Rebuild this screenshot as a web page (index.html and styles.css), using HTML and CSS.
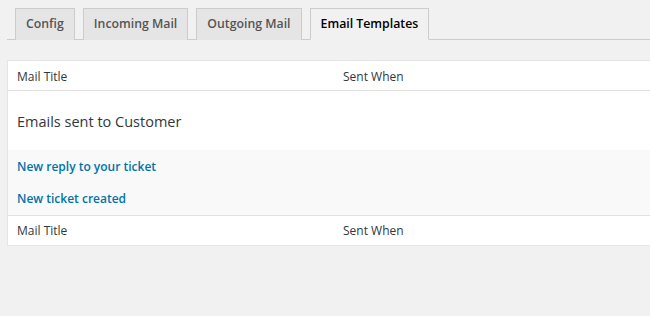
FILE: index.html
```html
<!DOCTYPE html>
<html>
<head>
    <title>Email Templates</title>
    <link rel="stylesheet" href="styles.css">
</head>
<body>
    <div class="wrap">
        <h2 class="nav-tab-wrapper">
            <a href="#" class="nav-tab">Config</a>
            <a href="#" class="nav-tab">Incoming Mail</a>
            <a href="#" class="nav-tab">Outgoing Mail</a>
            <a href="#" class="nav-tab nav-tab-active">Email Templates</a>
        </h2>
        <table class="widefat">
            <thead>
                <tr>
                    <td class="col-title">Mail Title</td>
                    <td>Sent When</td>
                </tr>
            </thead>
            <tbody>
                <tr class="group">
                    <td colspan="2">Emails sent to Customer</td>
                </tr>
                <tr class="alt">
                    <td><a href="#">New reply to your ticket</a></td>
                    <td></td>
                </tr>
                <tr class="alt last">
                    <td><a href="#">New ticket created</a></td>
                    <td></td>
                </tr>
            </tbody>
            <tfoot>
                <tr>
                    <td class="col-title">Mail Title</td>
                    <td>Sent When</td>
                </tr>
            </tfoot>
        </table>
    </div>
</body>
</html>
```

FILE: styles.css
```css
body {
    font-family: "Open Sans", sans-serif;
    font-size: 12px;
    color: #32373c;
    background-color: #f1f1f1;
    margin: 0;
    overflow: hidden;
}
.wrap {
    padding-left: 7px;
}
.nav-tab-wrapper {
    margin: 0;
    padding-top: 8px;
    border-bottom: 1px solid #ccc;
    display: flex;
    font-size: 12.3px;
}
.nav-tab {
    margin-left: 8px;
    margin-bottom: -1px;
    padding: 5px 10px;
    line-height: 20px;
    border: 1px solid #ccc;
    border-bottom: none;
    background-color: #e5e5e5;
    color: #555;
    font-weight: 600;
    text-decoration: none;
}
.nav-tab-active {
    background-color: #f1f1f1;
    border-bottom: 1px solid #f1f1f1;
    color: #000;
}
.widefat {
    margin-top: 20px;
    width: 652px;
    border-spacing: 0;
    border: 1px solid #e5e5e5;
    background-color: #fff;
    box-shadow: 0 1px 1px rgba(0, 0, 0, 0.04);
}
.widefat td {
    padding: 6px 9px;
    line-height: 18px;
    text-align: left;
}
.widefat .col-title {
    width: 308px;
}
.widefat thead td {
    padding: 7px 9px 4px;
    border-bottom: 1px solid #e1e1e1;
}
.widefat tfoot td {
    padding: 6px 9px 5px;
    border-top: 1px solid #e1e1e1;
}
.group td {
    font-size: 14.5px;
    padding: 22px 9px 19px;
}
.alt td {
    background-color: #f9f9f9;
    padding: 8px 9px 6px;
}
.last td {
    padding-bottom: 7px;
}
.alt a {
    color: #0073aa;
    font-weight: 600;
    text-decoration: none;
}
```
